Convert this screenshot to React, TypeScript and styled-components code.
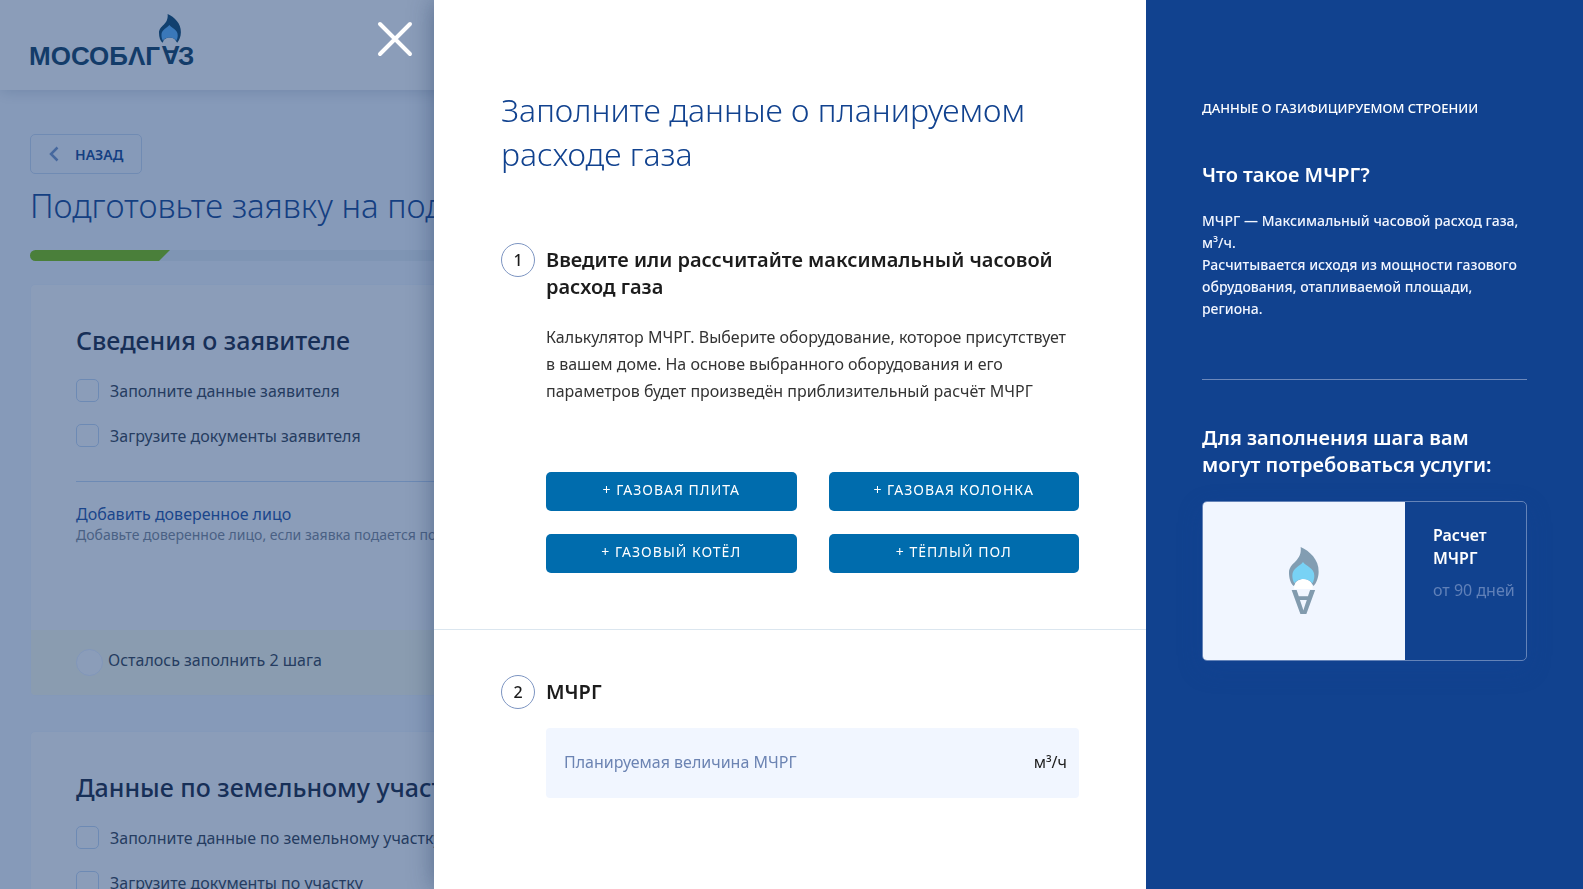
import React from "react";
import styled, { createGlobalStyle } from "styled-components";

const GlobalStyle = createGlobalStyle`
  *, *::before, *::after { box-sizing: border-box; }
  html, body { height: 100%; }
  body {
    margin: 0;
    overflow: hidden;
    background: #f5f9ff;
    color: #1c1c1c;
    font-family: "Noto Sans", sans-serif;
    font-size: 16px;
  }
  h1, h2, h3, p { margin: 0; }
  button, input { font-family: inherit; }
`;

/* ---------- page behind the dialog ---------- */

const Header = styled.header`
  position: relative;
  display: flex;
  align-items: flex-start;
  height: 90px;
  padding: 10px 30px;
  background: #fff;
  box-shadow: 0 0 16px rgba(0, 30, 60, 0.2);
`;

const Content = styled.main`
  display: flex;
  flex-direction: column;
  align-items: flex-start;
  padding: 44px 30px;
`;

const BackButton = styled.button`
  display: flex;
  align-items: center;
  gap: 16px;
  height: 40px;
  padding: 0 18px;
  border: 1px solid #c9daf2;
  border-radius: 5px;
  background: transparent;
  color: #11428f;
  font-size: 14px;
  font-weight: 600;
`;

const PageTitle = styled.h1`
  margin-top: 10px;
  color: #11428f;
  font-size: 33px;
  font-weight: 300;
  line-height: 44px;
  white-space: nowrap;
`;

const Progress = styled.div`
  width: 100%;
  height: 11px;
  margin-top: 22px;
  border-radius: 6px;
  background: #e6eef5;
  overflow: hidden;
`;

const ProgressValue = styled.div`
  width: 140px;
  height: 100%;
  background: #7dc301;
  clip-path: polygon(0 0, 100% 0, calc(100% - 11px) 100%, 0 100%);
`;

const Card = styled.section`
  width: 100%;
  border: 1px solid #f0f6ff;
  border-radius: 5px;
  background: #fff;
  overflow: hidden;
  & + & { margin-top: 35px; }
`;

const Cards = styled.div`
  width: 100%;
  margin-top: 23px;
`;

const CardBody = styled.div`
  min-height: 345px;
  padding: 37px 45px 0;
`;

const CardTitle = styled.h2`
  margin-bottom: 10px;
  color: #17233b;
  font-size: 25px;
  font-weight: 500;
  line-height: 36px;
`;

const CheckRow = styled.label`
  display: flex;
  align-items: center;
  gap: 11px;
  height: 45px;
  color: #333c4c;
  white-space: nowrap;
`;

const CheckBox = styled.input`
  appearance: none;
  width: 23px;
  height: 23px;
  margin: 0;
  border: 1px solid #c3d8f5;
  border-radius: 5px;
`;

const Rule = styled.hr`
  height: 1px;
  margin: 23px 0 21px;
  border: 0;
  background: #c3d8f5;
`;

const TextLink = styled.a`
  display: block;
  color: #1c4fa3;
  line-height: 22px;
  text-decoration: none;
`;

const Hint = styled.p`
  color: #7d8694;
  font-size: 14px;
  line-height: 20px;
  white-space: nowrap;
`;

const CardFooter = styled.div`
  display: flex;
  align-items: flex-start;
  gap: 5px;
  height: 65px;
  padding: 19px 45px;
  background: #fdfded;
  color: #333c4c;
  line-height: 22px;
`;

const Dot = styled.span`
  width: 27px;
  height: 27px;
  border: 1px solid #eaf0ff;
  border-radius: 50%;
  background: #fff;
`;

/* ---------- dialog ---------- */

const Overlay = styled.div`
  position: fixed;
  inset: 0;
  display: grid;
  grid-template-columns: minmax(0, 434fr) minmax(0, 712fr) minmax(0, 437fr);
  background: rgba(23, 59, 115, 0.5);
`;

const CloseSlot = styled.div`
  display: flex;
  align-items: flex-start;
  justify-content: flex-end;
  padding: 20px;
`;

const CloseButton = styled.button`
  display: flex;
  padding: 0;
  border: 0;
  background: none;
`;

const Panel = styled.div`
  background: #fff;
  box-shadow: 0 0 24px rgba(10, 35, 75, 0.4);
`;

const PanelTitle = styled.h2`
  padding: 88px 67px 67px;
  color: #11428f;
  font-size: 32px;
  font-weight: 300;
  line-height: 44px;
`;

const Step = styled.section`
  display: grid;
  grid-template-columns: 34px minmax(0, 1fr);
  column-gap: 11px;
  padding: 0 67px 56px;
  & + & {
    padding-top: 45px;
    border-top: 1px solid #dbe6ef;
  }
`;

const StepNumber = styled.span`
  display: flex;
  align-items: center;
  justify-content: center;
  height: 34px;
  border: 1px solid #7d95c2;
  border-radius: 50%;
  font-size: 16px;
  font-weight: 500;
`;

const StepTitle = styled.h3`
  margin: 3px 0 23px;
  font-size: 20px;
  font-weight: 600;
  line-height: 27px;
`;

const StepText = styled.p`
  padding-top: 1px;
  color: #333;
  line-height: 27px;
`;

const ButtonGrid = styled.div`
  display: grid;
  grid-template-columns: 1fr 1fr;
  gap: 23px 32px;
  margin-top: 67px;
`;

const AddButton = styled.button`
  height: 39px;
  padding: 0 0 4px;
  border: 0;
  border-radius: 5px;
  background: #006cad;
  color: #fff;
  font-size: 14px;
  letter-spacing: 1px;
  text-transform: uppercase;
`;

const Field = styled.label`
  display: flex;
  align-items: center;
  height: 70px;
  padding: 0 12px 2px 18px;
  border-radius: 4px;
  background: #f1f6ff;
`;

const FieldInput = styled.input`
  flex: 1;
  min-width: 0;
  padding: 0;
  border: 0;
  outline: 0;
  background: transparent;
  color: #1c1c1c;
  font-size: 16px;
  &::placeholder { color: #6c84b3; opacity: 1; }
`;

const Aside = styled.aside`
  padding: 95px 56px;
  background: #11428f;
  color: #fff;
`;

const AsideCaption = styled.p`
  margin-bottom: 40px;
  font-size: 13px;
  font-weight: 500;
  line-height: 26px;
  text-transform: uppercase;
  white-space: nowrap;
`;

const AsideTitle = styled.h3`
  font-size: 20px;
  font-weight: 600;
  line-height: 27px;
`;

const AsideText = styled.p`
  margin-top: 22px;
  color: #f2f6ff;
  font-size: 14px;
  font-weight: 500;
  line-height: 22px;
`;

const AsideRule = styled.hr`
  height: 1px;
  margin: 59px 0 44px;
  border: 0;
  background: #6c88bb;
`;

const Service = styled.a`
  display: grid;
  grid-template-columns: 202px minmax(0, 1fr);
  height: 160px;
  margin-top: 23px;
  border: 1px solid #6483b8;
  border-radius: 5px;
  overflow: hidden;
  color: inherit;
  text-decoration: none;
  box-shadow: 0 8px 24px rgba(20, 66, 150, 0.3);
`;

const ServiceImage = styled.div`
  display: flex;
  align-items: center;
  justify-content: center;
  background: #f1f6ff;
`;

const ServiceInfo = styled.div`
  padding: 22px 0 0 28px;
  line-height: 23px;
`;

const ServiceName = styled.p`
  width: 72px;
  font-weight: 600;
`;

const ServiceTerm = styled.p`
  margin-top: 9px;
  color: #6080b8;
  white-space: nowrap;
`;

type FlameProps = { outer: string; inner: string; glow: string };

function Flame({ outer, inner, glow }: FlameProps) {
  return (
    <>
      <path fill={glow} d="M15 126C16 106 28 97 43 97C58 97 70 106 71 126Z" />
      <path
        fill={outer}
        d="M35 0C62 12 90 38 89 74C89 92 82 108 74 117L70 112C66 102 56 96 43 96C30 96 19 103 17 113L14 117C5 109 0 94 0 77C0 46 40 44 35 0Z"
      />
      <path
        fill={inner}
        d="M42 45C34 58 10 62 10 86C10 96 13 103 16 109C21 101 31 96 42 96C54 96 65 101 70 109C74 102 76 95 76 86C76 62 50 58 42 45Z"
      />
    </>
  );
}

function Logo() {
  return (
    <svg width="172" height="70" viewBox="0 0 172 70" role="img" aria-label="Мособлгаз">
      <g transform="translate(129 4) scale(0.246)">
        <Flame outer="#0b456b" inner="#5db5ff" glow="#fff" />
      </g>
      <g fill="#0f3d5f" fontFamily="Liberation Sans, sans-serif" fontWeight="700" fontSize="26">
        <text x="-1" y="55">МОСОБΛГ</text>
        <text transform="translate(150 36) rotate(180)">А</text>
        <text x="148" y="55">З</text>
      </g>
    </svg>
  );
}

function TorchIcon() {
  return (
    <svg width="34" height="70" viewBox="0 0 34 70" aria-hidden="true">
      <g transform="translate(2 1) scale(0.333)">
        <Flame outer="#829db2" inner="#78d2f5" glow="#fff" />
      </g>
      <text
        transform="translate(29 44) rotate(180)"
        fill="#829bae"
        fontFamily="Liberation Sans, sans-serif"
        fontWeight="700"
        fontSize="35"
      >
        А
      </text>
    </svg>
  );
}

const equipment = ["Газовая плита", "Газовая колонка", "Газовый котёл", "Тёплый пол"];

function CheckList({ items }: { items: string[] }) {
  return (
    <>
      {items.map((item) => (
        <CheckRow key={item}>
          <CheckBox type="checkbox" />
          {item}
        </CheckRow>
      ))}
    </>
  );
}

export default function App() {
  return (
    <>
      <GlobalStyle />
      <Header>
        <Logo />
      </Header>
      <Content>
        <BackButton type="button">
          <svg width="10" height="16" viewBox="0 0 10 16" aria-hidden="true">
            <path d="M8.500 1.500L2 8L8.500 14.500" fill="none" stroke="#7595c8" strokeWidth="2.500" />
          </svg>
          НАЗАД
        </BackButton>
        <PageTitle>Подготовьте заявку на подключение</PageTitle>
        <Progress>
          <ProgressValue />
        </Progress>
        <Cards>
          <Card>
            <CardBody>
              <CardTitle>Сведения о заявителе</CardTitle>
              <CheckList items={["Заполните данные заявителя", "Загрузите документы заявителя"]} />
              <Rule />
              <TextLink href="#trustee">Добавить доверенное лицо</TextLink>
              <Hint>Добавьте доверенное лицо, если заявка подается по доверенности</Hint>
            </CardBody>
            <CardFooter>
              <Dot />
              Осталось заполнить 2 шага
            </CardFooter>
          </Card>
          <Card>
            <CardBody>
              <CardTitle>Данные по земельному участку</CardTitle>
              <CheckList items={["Заполните данные по земельному участку", "Загрузите документы по участку"]} />
            </CardBody>
          </Card>
        </Cards>
      </Content>

      <Overlay role="dialog" aria-modal="true" aria-labelledby="dialog-title">
        <CloseSlot>
          <CloseButton type="button" aria-label="Закрыть">
            <svg width="38" height="38" viewBox="0 0 38 38" aria-hidden="true">
              <path d="M4 4L34 34M34 4L4 34" fill="none" stroke="#fff" strokeWidth="4" strokeLinecap="round" />
            </svg>
          </CloseButton>
        </CloseSlot>

        <Panel>
          <PanelTitle id="dialog-title">Заполните данные о планируемом расходе газа</PanelTitle>
          <Step>
            <StepNumber>1</StepNumber>
            <div>
              <StepTitle>Введите или рассчитайте максимальный часовой расход газа</StepTitle>
              <StepText>
                Калькулятор МЧРГ. Выберите оборудование, которое присутствует
                <br />
                в вашем доме. На основе выбранного оборудования и его
                <br />
                параметров будет произведён приблизительный расчёт МЧРГ
              </StepText>
              <ButtonGrid>
                {equipment.map((name) => (
                  <AddButton type="button" key={name}>
                    + {name}
                  </AddButton>
                ))}
              </ButtonGrid>
            </div>
          </Step>
          <Step>
            <StepNumber>2</StepNumber>
            <div>
              <StepTitle>МЧРГ</StepTitle>
              <Field>
                <FieldInput type="text" placeholder="Планируемая величина МЧРГ" />
                <span>м³/ч</span>
              </Field>
            </div>
          </Step>
        </Panel>

        <Aside>
          <AsideCaption>Данные о газифицируемом строении</AsideCaption>
          <AsideTitle>Что такое МЧРГ?</AsideTitle>
          <AsideText>
            МЧРГ — Максимальный часовой расход газа, м³/ч.
            <br />
            Расчитывается исходя из мощности газового обрудования, отапливаемой площади, региона.
          </AsideText>
          <AsideRule />
          <AsideTitle>Для заполнения шага вам могут потребоваться услуги:</AsideTitle>
          <Service href="#mchrg">
            <ServiceImage>
              <TorchIcon />
            </ServiceImage>
            <ServiceInfo>
              <ServiceName>Расчет МЧРГ</ServiceName>
              <ServiceTerm>от 90 дней</ServiceTerm>
            </ServiceInfo>
          </Service>
        </Aside>
      </Overlay>
    </>
  );
}
